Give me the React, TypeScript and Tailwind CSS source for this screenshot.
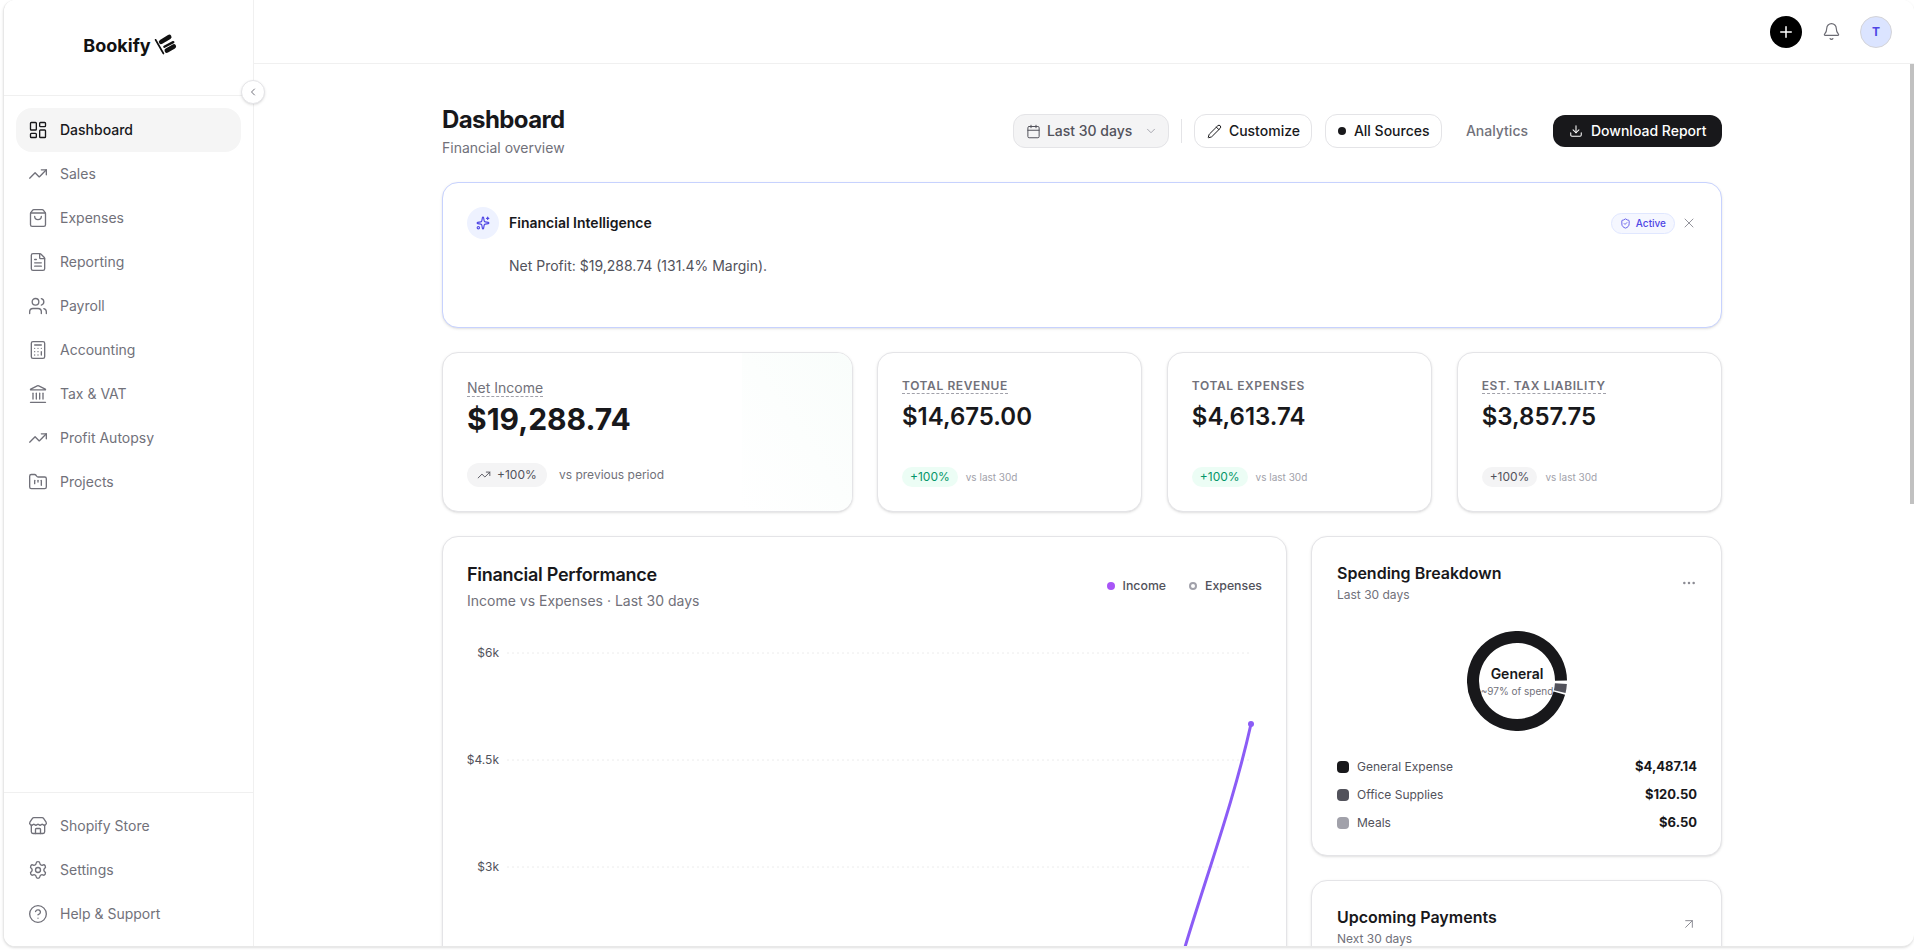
import React from "react";
import {
  LayoutDashboard,
  TrendingUp,
  ShoppingBag,
  FileText,
  Users,
  Calculator,
  Landmark,
  FolderKanban,
  Store,
  Settings,
  CircleHelp,
  ChevronLeft,
  ChevronDown,
  Calendar,
  Pencil,
  Download,
  Sparkles,
  ShieldCheck,
  X,
  Ellipsis,
  ArrowUpRight,
  Plus,
  Bell,
} from "lucide-react";

const mainNav = [
  { label: "Dashboard", icon: LayoutDashboard, active: true },
  { label: "Sales", icon: TrendingUp },
  { label: "Expenses", icon: ShoppingBag },
  { label: "Reporting", icon: FileText },
  { label: "Payroll", icon: Users },
  { label: "Accounting", icon: Calculator },
  { label: "Tax & VAT", icon: Landmark },
  { label: "Profit Autopsy", icon: TrendingUp },
  { label: "Projects", icon: FolderKanban },
];

const bottomNav = [
  { label: "Shopify Store", icon: Store },
  { label: "Settings", icon: Settings },
  { label: "Help & Support", icon: CircleHelp },
];

const kpis = [
  { label: "Total Revenue", value: "$14,675.00", dashed: true, green: true },
  { label: "Total Expenses", value: "$4,613.74", dashed: false, green: true },
  { label: "Est. Tax Liability", value: "$3,857.75", dashed: true, green: false },
];

const spending = [
  { label: "General Expense", value: "$4,487.14", swatch: "bg-[#18181b]" },
  { label: "Office Supplies", value: "$120.50", swatch: "bg-[#52525b]" },
  { label: "Meals", value: "$6.50", swatch: "bg-[#a1a1aa]" },
];

const NavItem = ({ item }: { item: { label: string; icon: React.ElementType; active?: boolean } }) => {
  const Icon = item.icon;
  return (
    <div
      className={
        item.active
          ? "flex h-[44px] items-center gap-[12px] rounded-2xl bg-[#f5f5f5] pl-[12px] text-sm font-medium text-[#18181b]"
          : "flex h-[44px] items-center gap-[12px] rounded-2xl pl-[12px] text-sm text-[#71717a]"
      }
    >
      <Icon size={20} strokeWidth={1.6} />
      <span>{item.label}</span>
    </div>
  );
};

const Logo = () => (
  <svg width="22" height="22" viewBox="0 0 24 24" className="overflow-visible text-[#111]">
    <path d="M1.7 6.3 L10.3 21.3" stroke="currentColor" strokeWidth="1.8" strokeLinecap="round" />
    <path d="M7.8 8.6 L16.6 3.2" stroke="currentColor" strokeWidth="5" strokeLinecap="round" />
    <path d="M11.3 13.9 L21 8.9" stroke="currentColor" strokeWidth="2.6" strokeLinecap="round" />
    <path d="M14 18 L21.6 13.6" stroke="currentColor" strokeWidth="5" strokeLinecap="round" />
  </svg>
);

const Sidebar = () => (
  <aside className="relative flex w-[250px] shrink-0 flex-col border-r border-[#f0f0f0] bg-white">
    <div className="flex h-[96px] shrink-0 items-start justify-center gap-[3px] border-b border-[#f0f0f0] pt-[30px] pl-[2px]">
      <span className="text-lg leading-[32px] font-bold text-[#111]">Bookify</span>
      <div className="pt-[4px]">
        <Logo />
      </div>
    </div>
    <div className="absolute top-[80px] right-[-12px] z-10 flex h-[24px] w-[24px] items-center justify-center rounded-full border border-[#e4e4e7] bg-white text-[#71717a] shadow-sm">
      <ChevronLeft size={12} />
    </div>
    <nav className="flex flex-1 flex-col px-[12px] pt-[12px]">
      {mainNav.map((item) => (
        <NavItem key={item.label} item={item} />
      ))}
    </nav>
    <div className="flex h-[154px] shrink-0 flex-col border-t border-[#f0f0f0] px-[12px] pt-[11px]">
      {bottomNav.map((item) => (
        <NavItem key={item.label} item={item} />
      ))}
    </div>
  </aside>
);

const Topbar = () => (
  <header className="flex h-[64px] shrink-0 items-center justify-end border-b border-[#f0f0f0] bg-white pr-[22px]">
    <div className="flex h-[32px] w-[32px] items-center justify-center rounded-full bg-black text-white">
      <Plus size={18} strokeWidth={2} />
    </div>
    <Bell size={19} strokeWidth={1.5} className="ml-[20px] text-[#6b6b73]" />
    <div className="ml-[19px] flex h-[32px] w-[32px] items-center justify-center rounded-full border border-[#d4d4d8] bg-[#dbe4ff] text-xs font-bold text-[#4f46e5]">
      T
    </div>
  </header>
);

const PageHeader = () => (
  <div className="flex items-start justify-between">
    <div>
      <h1 className="text-2xl leading-[32px] font-bold tracking-tight text-[#18181b]">Dashboard</h1>
      <p className="mt-[2px] text-sm leading-[20px] text-[#71717a]">Financial overview</p>
    </div>
    <div className="mt-[10px] flex h-[34px] items-center text-sm font-medium">
      <div className="flex h-[34px] w-[156px] items-center gap-[6px] rounded-xl border border-[#e4e4e7] bg-[#f4f4f5] pl-[12px] text-[#52525b]">
        <Calendar size={15} strokeWidth={1.6} />
        <span>Last 30 days</span>
        <ChevronDown size={14} strokeWidth={1.6} className="ml-[6px] text-[#a1a1aa]" />
      </div>
      <div className="mx-[12px] h-[24px] w-px bg-[#e4e4e7]" />
      <div className="flex h-[34px] w-[118px] items-center gap-[7px] rounded-xl border border-[#e4e4e7] bg-white pl-[12px] text-[#18181b]">
        <Pencil size={15} strokeWidth={1.6} />
        <span>Customize</span>
      </div>
      <div className="ml-[13px] flex h-[34px] w-[117px] items-center gap-[8px] rounded-xl border border-[#e4e4e7] bg-white pl-[12px] text-[#18181b]">
        <span className="h-[8px] w-[8px] rounded-full bg-[#18181b]" />
        <span>All Sources</span>
      </div>
      <span className="ml-[24px] text-[#71717a]">Analytics</span>
      <div className="ml-[25px] flex h-[32px] w-[169px] items-center gap-[8px] rounded-xl bg-[#18181b] pl-[16px] text-white">
        <Download size={14} strokeWidth={1.8} />
        <span>Download Report</span>
      </div>
    </div>
  </div>
);

const InsightCard = () => (
  <section className="mt-[24px] h-[146px] rounded-2xl border border-[#c7d2fe] bg-white pt-[24px] pr-[24px] pl-[24px] shadow-sm">
    <div className="flex items-center">
      <div className="flex h-[32px] w-[32px] items-center justify-center rounded-full bg-[#eef2ff] text-[#4f46e5]">
        <Sparkles size={14} strokeWidth={2} />
      </div>
      <h3 className="ml-[10px] text-sm font-semibold text-[#18181b]">Financial Intelligence</h3>
      <div className="ml-auto flex h-[21px] items-center gap-[5px] rounded-full border border-[#e0e7ff] bg-[#f5f7ff] pr-[8px] pl-[8px] text-[10px] font-medium text-[#4f46e5]">
        <ShieldCheck size={11} strokeWidth={1.8} />
        <span>Active</span>
      </div>
      <X size={16} strokeWidth={1.4} className="ml-[6px] text-[#8c8c94]" />
    </div>
    <p className="mt-[17px] ml-[42px] text-sm leading-[20px] text-[#52525b]">
      Net Profit: $19,288.74 (131.4% Margin).
    </p>
  </section>
);

const KpiRow = () => (
  <div className="mt-[24px] grid h-[160px] grid-cols-[410fr_265fr_265fr_265fr] gap-[24.5px]">
    <div className="relative overflow-hidden rounded-2xl border border-[#e4e4e7] bg-white px-[24px] pt-[22px] shadow-sm">
      <div className="absolute top-0 right-0 h-full w-[110px] bg-gradient-to-bl from-[#f9fdfb] to-white" />
      <div className="relative">
        <span className="border-b border-dashed border-[#a1a1aa] text-sm leading-[18px] text-[#71717a]">Net Income</span>
        <div className="mt-[2px] text-3xl leading-[36px] font-bold text-[#18181b]">$19,288.74</div>
        <div className="mt-[26px] flex items-center">
          <div className="flex h-[24px] w-[80px] items-center gap-[6px] rounded-full bg-[#f4f4f5] pl-[10px] text-xs text-[#52525b]">
            <TrendingUp size={14} strokeWidth={1.6} />
            <span>+100%</span>
          </div>
          <span className="ml-[12px] text-xs text-[#71717a]">vs previous period</span>
        </div>
      </div>
    </div>
    {kpis.map((k) => (
      <div key={k.label} className="rounded-2xl border border-[#e4e4e7] bg-white px-[24px] pt-[19px] shadow-sm">
        <span
          className={
            k.dashed
              ? "border-b border-dashed border-[#a1a1aa] text-xs leading-[16px] font-semibold tracking-wider text-[#71717a] uppercase"
              : "text-xs leading-[16px] font-semibold tracking-wider text-[#71717a] uppercase"
          }
        >
          {k.label}
        </span>
        <div className="mt-[5px] text-2xl leading-[32px] font-semibold text-[#18181b]">{k.value}</div>
        <div className="mt-[34px] flex items-center gap-[8px]">
          <span
            className={
              k.green
                ? "flex h-[20px] items-center rounded-full bg-[#ecfdf5] px-[8px] text-xs text-[#059669]"
                : "flex h-[20px] items-center rounded-full bg-[#f4f4f5] px-[8px] text-xs text-[#52525b]"
            }
          >
            +100%
          </span>
          <span className="text-[10px] text-[#a1a1aa]">vs last 30d</span>
        </div>
      </div>
    ))}
  </div>
);

const ChartCard = () => (
  <section className="rounded-2xl border border-[#e4e4e7] bg-white px-[24px] pt-[24px] pb-[24px] shadow-sm">
    <div className="flex items-start justify-between">
      <div>
        <h3 className="text-lg leading-[28px] font-semibold tracking-[-0.015em] text-[#18181b]">Financial Performance</h3>
        <p className="mt-[2px] text-sm leading-[20px] text-[#71717a]">Income vs Expenses · Last 30 days</p>
      </div>
      <div className="mt-[16px] flex items-center text-[12.3px] font-medium text-[#52525b]">
        <span className="h-[8px] w-[8px] rounded-full bg-[#a855f7]" />
        <span className="ml-[8px]">Income</span>
        <span className="ml-[23px] h-[8px] w-[8px] rounded-full border-2 border-[#a1a1aa]" />
        <span className="ml-[8px]">Expenses</span>
      </div>
    </div>
    <svg viewBox="0 0 795 500" className="mt-[19px] block h-[500px] w-full">
      {[
        { y: 23, t: "$6k" },
        { y: 130, t: "$4.5k" },
        { y: 237, t: "$3k" },
      ].map((g) => (
        <g key={g.t}>
          <line x1="40" x2="785" y1={g.y} y2={g.y} stroke="#ececec" strokeDasharray="2 3" />
          <text x="32" y={g.y + 4} textAnchor="end" fontSize="12" fill="#52525b" fontFamily="Inter, sans-serif">
            {g.t}
          </text>
        </g>
      ))}
      <path d="M700 370 L718 317 C 741 241, 767 170, 784 94" fill="none" stroke="#8b5cf6" strokeWidth="3" />
      <circle cx="784" cy="94" r="3" fill="#8b5cf6" />
    </svg>
  </section>
);

const DonutCard = () => (
  <section className="h-[320px] rounded-2xl border border-[#e4e4e7] bg-white pt-[24px] pr-[24px] pl-[25px] shadow-sm">
    <div className="flex items-start justify-between">
      <div>
        <h3 className="text-base leading-[24px] font-semibold text-[#18181b]">Spending Breakdown</h3>
        <p className="text-xs leading-[20px] text-[#71717a]">Last 30 days</p>
      </div>
      <Ellipsis size={16} strokeWidth={1.8} className="mt-[14px] text-[#8c8c94]" />
    </div>
    <div className="relative mx-auto mt-[26px] h-[100px] w-[100px]">
      <svg viewBox="0 0 100 100" className="h-[100px] w-[100px]">
        <path d="M92.3 62.1 A44 44 0 1 1 94 49.6" fill="none" stroke="#18181b" strokeWidth="12" />
        <path d="M93.9 52.7 A44 44 0 0 1 92.7 60.6" fill="none" stroke="#52525b" strokeWidth="12" />
      </svg>
      <div className="absolute inset-0 flex flex-col items-center justify-center text-center">
        <span className="text-sm leading-[20px] font-semibold text-[#18181b]">General</span>
        <span className="text-[10px] leading-[14px] whitespace-nowrap text-[#71717a]">~97% of spend</span>
      </div>
    </div>
    <div className="mt-[26px] flex flex-col gap-[8px]">
      {spending.map((s) => (
        <div key={s.label} className="flex h-[20px] items-center text-xs">
          <span className={`h-[12px] w-[12px] rounded-[4px] ${s.swatch}`} />
          <span className="ml-[8px] text-[#52525b]">{s.label}</span>
          <span className="ml-auto text-[13px] font-bold text-[#18181b]">{s.value}</span>
        </div>
      ))}
    </div>
  </section>
);

const PaymentsCard = () => (
  <section className="mt-[24px] h-[200px] rounded-2xl border border-[#e4e4e7] bg-white pt-[24px] pr-[24px] pl-[25px] shadow-sm">
    <div className="flex items-start justify-between">
      <div>
        <h3 className="text-base leading-[24px] font-semibold text-[#18181b]">Upcoming Payments</h3>
        <p className="text-xs leading-[20px] text-[#71717a]">Next 30 days</p>
      </div>
      <ArrowUpRight size={16} strokeWidth={1.5} className="mt-[11px] text-[#8c8c94]" />
    </div>
  </section>
);

export default function App() {
  return (
    <div className="h-screen overflow-hidden bg-white pb-[3px] pl-[3px] font-['Inter',sans-serif]">
      <div className="flex h-full overflow-hidden rounded-xl border-b border-l border-[#e8e8e8] bg-white shadow-sm">
        <Sidebar />
        <div className="relative flex min-w-0 flex-1 flex-col">
          <Topbar />
          <div className="absolute top-[64px] right-0 h-[440px] w-[4px] bg-[#c1c1c1]" />
          <main className="flex-1 overflow-hidden pt-[40px] pr-[4px]">
            <div className="mx-auto w-[1280px]">
              <PageHeader />
              <InsightCard />
              <KpiRow />
              <div className="mt-[24px] grid grid-cols-[845fr_411fr] items-start gap-[24px]">
                <ChartCard />
                <div>
                  <DonutCard />
                  <PaymentsCard />
                </div>
              </div>
            </div>
          </main>
        </div>
      </div>
    </div>
  );
}
